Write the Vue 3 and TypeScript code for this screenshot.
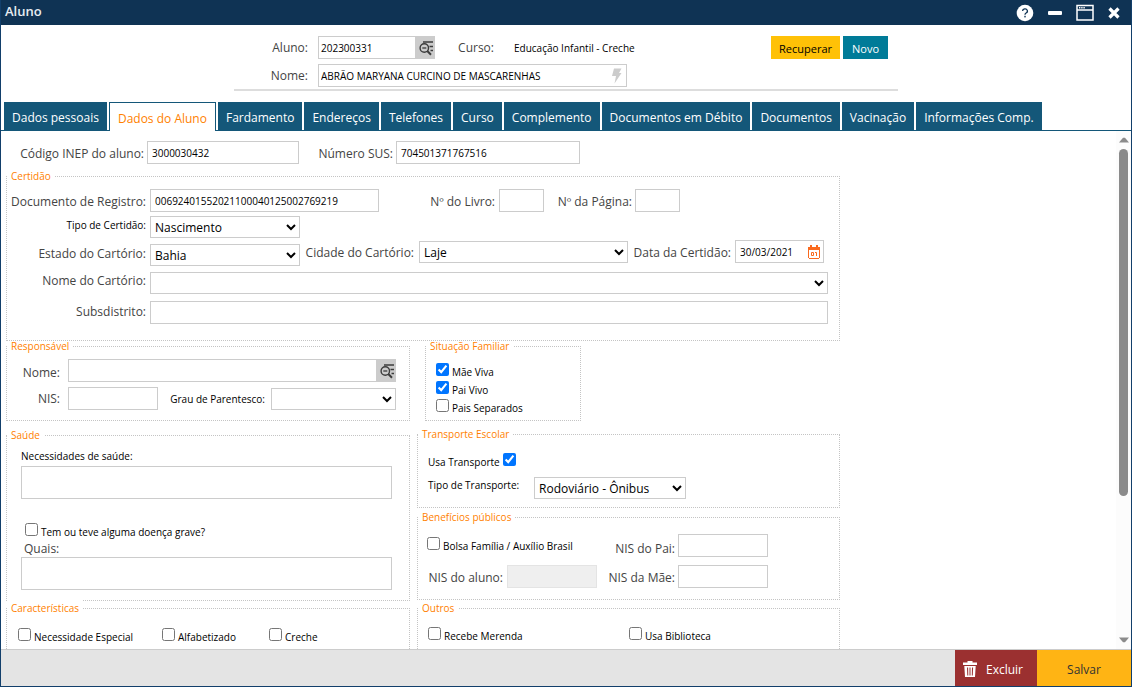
<script setup lang="ts">
import { ref } from 'vue'

const tabs = [
  'Dados pessoais',
  'Dados do Aluno',
  'Fardamento',
  'Endereços',
  'Telefones',
  'Curso',
  'Complemento',
  'Documentos em Débito',
  'Documentos',
  'Vacinação',
  'Informações Comp.',
]
const activeTab = ref('Dados do Aluno')

const family = ref([
  { id: 'mae-viva', label: 'Mãe Viva', checked: true },
  { id: 'pai-vivo', label: 'Pai Vivo', checked: true },
  { id: 'pais-separados', label: 'Pais Separados', checked: false },
])

const form = ref({
  aluno: '202300331',
  nome: 'ABRÃO MARYANA CURCINO DE MASCARENHAS',
  inep: '3000030432',
  sus: '704501371767516',
  registro: '00692401552021100040125002769219',
  livro: '',
  pagina: '',
  tipo: 'Nascimento',
  estado: 'Bahia',
  cidade: 'Laje',
  data: '30/03/2021',
  cartorio: '',
  subdistrito: '',
  responsavel: '',
  nis: '',
  parentesco: '',
  necessidades: '',
  doenca: false,
  quais: '',
  usaTransporte: true,
  transporte: 'Rodoviário - Ônibus',
  bolsa: false,
  nisPai: '',
  nisAluno: '',
  nisMae: '',
})
</script>

<template>
  <div class="window">
    <header class="titlebar">
      <h1>Aluno</h1>
      <div class="controls">
        <button type="button" aria-label="Ajuda">
          <svg width="18" height="18" viewBox="0 0 18 18">
            <circle cx="9" cy="9" r="8.3" fill="#fff" />
            <path d="M6.600 7a2.400 2.200 0 1 1 3.500 2c-.8.5-1.100.8-1.100 1.700" fill="none" stroke="#0f3354" stroke-width="1.300" />
            <rect x="8.300" y="11.800" width="1.400" height="1.600" fill="#0f3354" />
          </svg>
        </button>
        <button type="button" aria-label="Minimizar">
          <svg width="14" height="18" viewBox="0 0 14 18"><rect x="0" y="7" width="14" height="4" rx="1" fill="#fff" /></svg>
        </button>
        <button type="button" aria-label="Maximizar">
          <svg width="18" height="18" viewBox="0 0 18 18">
            <path d="M1 1.500h16v14.500H1zM1 6h16" fill="none" stroke="#fff" stroke-width="1.500" />
            <path d="M3 3.700h6" stroke="#fff" stroke-width="1.400" stroke-dasharray="1.400 .8" />
          </svg>
        </button>
        <button type="button" aria-label="Fechar">
          <svg width="12" height="18" viewBox="0 0 12 18"><path d="M1.500 4.500l9 9m0-9l-9 9" stroke="#fff" stroke-width="3.200" /></svg>
        </button>
      </div>
    </header>

    <section class="summary">
      <div class="row">
        <label class="lbl head-lbl" for="aluno">Aluno:</label>
        <div class="lookup code">
          <input id="aluno" v-model="form.aluno" class="tight" type="text" />
          <button type="button" aria-label="Pesquisar aluno">
            <svg width="18" height="18" viewBox="0 0 18 18" fill="none" stroke="#3c3c3c">
              <path d="M6 3h10M12.500 7.500h3.500M13.500 11.500h2.500" stroke-width="1.700" />
              <circle cx="7.300" cy="9" r="4.200" stroke-width="1.400" />
              <path d="M5.300 9h4" stroke-width="1.300" /><path d="M10.300 12l3.700 3.700" stroke-width="2" />
            </svg>
          </button>
        </div>
        <span class="lbl course-lbl">Curso:</span>
        <span class="course">Educação Infantil - Creche</span>
        <div class="actions">
          <button type="button" class="recover">Recuperar</button>
          <button type="button" class="new">Novo</button>
        </div>
      </div>
      <div class="row">
        <label class="lbl head-lbl" for="nome">Nome:</label>
        <div class="boxed name-box">
          <input id="nome" v-model="form.nome" class="tight" type="text" />
          <svg width="12" height="18" viewBox="0 0 12 18"><path d="M3 1.500H10.500L8 6h2.500L3.500 16.500 5 9H1z" fill="#ccc" /></svg>
        </div>
      </div>
    </section>

    <nav class="tabs" role="tablist">
      <button
        v-for="tab in tabs"
        :key="tab"
        type="button"
        role="tab"
        :aria-selected="tab === activeTab"
        :class="{ active: tab === activeTab }"
        @click="activeTab = tab"
      >
        {{ tab }}
      </button>
    </nav>

    <div class="body">
      <main class="scroll">
        <form class="form" @submit.prevent>
          <div class="row codes">
            <label class="lbl" for="inep">Código INEP do aluno:</label>
            <input id="inep" v-model="form.inep" class="w-inep" type="text" />
            <label class="lbl sus-lbl" for="sus">Número SUS:</label>
            <input id="sus" v-model="form.sus" class="w-sus" type="text" />
          </div>

          <fieldset class="certidao">
            <legend>Certidão</legend>
            <div class="row">
              <label class="lbl first" for="registro">Documento de Registro:</label>
              <input id="registro" v-model="form.registro" class="w-reg" type="text" />
              <label class="lbl livro-lbl" for="livro">Nº do Livro:</label>
              <input id="livro" v-model="form.livro" class="w-mini" type="text" />
              <label class="lbl pagina-lbl" for="pagina">Nº da Página:</label>
              <input id="pagina" v-model="form.pagina" class="w-mini" type="text" />
            </div>
            <div class="row tipo-row">
              <label class="lbl first dark" for="tipo">Tipo de Certidão:</label>
              <select id="tipo" v-model="form.tipo" class="w-150"><option>Nascimento</option><option>Casamento</option></select>
            </div>
            <div class="row estado-row">
              <div class="row low">
                <label class="lbl first" for="estado">Estado do Cartório:</label>
                <select id="estado" v-model="form.estado" class="w-150"><option>Bahia</option></select>
              </div>
              <label class="lbl cidade-lbl" for="cidade">Cidade do Cartório:</label>
              <select id="cidade" v-model="form.cidade" class="w-cidade"><option>Laje</option></select>
              <label class="lbl data-lbl" for="data">Data da Certidão:</label>
              <div class="boxed date-box">
                <input id="data" v-model="form.data" type="text" />
                <button type="button" aria-label="Abrir calendário">
                  <svg width="12" height="14" viewBox="0 0 12 14" fill="#fa6a1e">
                    <path fill-rule="evenodd" d="M0 2h12v11h-1v1H1v-1H0zM1 5v8h10V5z" />
                    <path d="M2 0h2v3H2zM8 0h2v3H8z" />
                    <path d="M3.500 7.500h2v3h-2zM7 7.500h1.500V11" fill="none" stroke="#fa6a1e" />
                  </svg>
                </button>
              </div>
            </div>
            <div class="row cartorio-row">
              <label class="lbl first" for="cartorio">Nome do Cartório:</label>
              <select id="cartorio" v-model="form.cartorio" class="grow"><option value=""></option></select>
            </div>
            <div class="row sub-row">
              <label class="lbl first" for="subdistrito">Subsdistrito:</label>
              <input id="subdistrito" v-model="form.subdistrito" class="grow" type="text" />
            </div>
          </fieldset>

          <div class="columns">
            <fieldset class="responsavel">
              <legend>Responsável</legend>
              <div class="row">
                <label class="lbl short" for="responsavel">Nome:</label>
                <div class="lookup grow">
                  <input id="responsavel" v-model="form.responsavel" type="text" />
                  <button type="button" aria-label="Pesquisar responsável">
                    <svg width="18" height="18" viewBox="0 0 18 18" fill="none" stroke="#3c3c3c">
                      <path d="M6 3h10M12.500 7.500h3.500M13.500 11.500h2.500" stroke-width="1.700" />
                      <circle cx="7.300" cy="9" r="4.200" stroke-width="1.400" />
                      <path d="M5.300 9h4" stroke-width="1.300" /><path d="M10.300 12l3.700 3.700" stroke-width="2" />
                    </svg>
                  </button>
                </div>
              </div>
              <div class="row nis-row">
                <label class="lbl short" for="nis">NIS:</label>
                <input id="nis" v-model="form.nis" class="w-90" type="text" />
                <label class="lbl dark grau-lbl" for="parentesco">Grau de Parentesco:</label>
                <select id="parentesco" v-model="form.parentesco" class="grow"><option value=""></option></select>
              </div>
            </fieldset>

            <fieldset class="situacao">
              <legend>Situação Familiar</legend>
              <div v-for="item in family" :key="item.id" class="check">
                <input :id="item.id" v-model="item.checked" type="checkbox" />
                <label :for="item.id">{{ item.label }}</label>
              </div>
            </fieldset>

            <fieldset class="saude">
              <legend>Saúde</legend>
              <label class="block dark" for="necessidades">Necessidades de saúde:</label>
              <textarea id="necessidades" v-model="form.necessidades"></textarea>
              <div class="check doenca">
                <input id="doenca" v-model="form.doenca" type="checkbox" />
                <label for="doenca">Tem ou teve alguma doença grave?</label>
              </div>
              <label class="block quais" for="quais">Quais:</label>
              <textarea id="quais" v-model="form.quais"></textarea>
            </fieldset>

            <div class="stack">
              <fieldset class="transporte">
                <legend>Transporte Escolar</legend>
                <div class="check">
                  <label for="usa-transporte">Usa Transporte</label>
                  <input id="usa-transporte" v-model="form.usaTransporte" type="checkbox" />
                </div>
                <div class="row tipo-transporte">
                  <label class="lbl dark" for="transporte">Tipo de Transporte:</label>
                  <select id="transporte" v-model="form.transporte" class="w-inep"><option>Rodoviário - Ônibus</option></select>
                </div>
              </fieldset>
              <fieldset class="beneficios">
                <legend>Benefícios públicos</legend>
                <div class="row">
                  <div class="check bolsa">
                    <input id="bolsa" v-model="form.bolsa" type="checkbox" />
                    <label for="bolsa">Bolsa Família / Auxílio Brasil</label>
                  </div>
                  <label class="lbl nis-lbl" for="nis-pai">NIS do Pai:</label>
                  <input id="nis-pai" v-model="form.nisPai" class="w-90" type="text" />
                </div>
                <div class="row">
                  <label class="lbl aluno-lbl" for="nis-aluno">NIS do aluno:</label>
                  <input id="nis-aluno" v-model="form.nisAluno" class="w-90" type="text" disabled />
                  <label class="lbl nis-lbl" for="nis-mae">NIS da Mãe:</label>
                  <input id="nis-mae" v-model="form.nisMae" class="w-90" type="text" />
                </div>
              </fieldset>
            </div>

            <fieldset class="caracteristicas">
              <legend>Características</legend>
              <div class="check"><input id="especial" type="checkbox" /><label for="especial">Necessidade Especial</label></div>
              <div class="check"><input id="alfabetizado" type="checkbox" /><label for="alfabetizado">Alfabetizado</label></div>
              <div class="check"><input id="creche" type="checkbox" /><label for="creche">Creche</label></div>
            </fieldset>

            <fieldset class="outros">
              <legend>Outros</legend>
              <div class="check"><input id="merenda" type="checkbox" /><label for="merenda">Recebe Merenda</label></div>
              <div class="check"><input id="biblioteca" type="checkbox" /><label for="biblioteca">Usa Biblioteca</label></div>
            </fieldset>
          </div>
        </form>
      </main>
      <div class="scrollbar" aria-hidden="true">
        <svg width="10" height="6" viewBox="0 0 10 6"><path d="M0 5.500L4 .8h2l4 4.700z" fill="#8b8b8b" /></svg>
        <div class="track"><div class="thumb"></div></div>
        <svg width="10" height="6" viewBox="0 0 10 6"><path d="M0 .5L4 5.200h2L10 .5z" fill="#8b8b8b" /></svg>
      </div>
    </div>

    <footer class="footer">
      <button type="button" class="delete">
        <svg width="14" height="16" viewBox="0 0 14 16" fill="#fff">
          <path d="M4.500 0h5v1.500H14V4H0V1.500h4.500z" />
          <path fill-rule="evenodd" d="M1.300 5h11.400L12 16H2zM4 6.500l.3 8h1l-.2-8zM6.500 6.500v8h1v-8zM9 6.500l-.2 8h1l.3-8z" />
        </svg>
        Excluir
      </button>
      <button type="button" class="save">Salvar</button>
    </footer>
  </div>
</template>

<style>
body {
  margin: 0;
}
</style>

<style scoped>
* {
  box-sizing: border-box;
}
.window {
  display: flex;
  flex-direction: column;
  height: 100vh;
  border: 1px solid #123f6b;
  border-top: 0;
  background: #fff;
  color: #000;
  font-family: 'Open Sans', 'Noto Sans', sans-serif;
  font-size: 10px;
  overflow: hidden;
}
button,
input,
select,
textarea {
  font-family: inherit;
  margin: 0;
}
button {
  border: 0;
  padding: 0;
  background: none;
  font-size: 12px;
}
svg {
  display: block;
  flex: none;
}
.titlebar {
  display: flex;
  flex: none;
  justify-content: space-between;
  align-items: center;
  height: 25px;
  padding: 0 11px 0 4px;
  background: #0f3354;
}
.titlebar h1 {
  margin: 0;
  padding-bottom: 3px;
  color: #e8edf2;
  font-size: 13px;
  font-weight: 600;
  line-height: 20px;
}
.controls {
  display: flex;
  gap: 14px;
}
.row {
  display: flex;
  align-items: center;
}
.lbl {
  flex: none;
  padding-top: 2px;
  color: #444;
  font-size: 12px;
  line-height: 16px;
  text-align: right;
  white-space: nowrap;
}
.dark.lbl,
.dark {
  color: #000;
  font-size: 10px;
}
input[type='text'],
select,
textarea {
  display: block;
  flex: none;
  border: 1px solid #ccc;
  border-radius: 0;
  background: #fff;
  color: #000;
  outline: 0;
}
input[type='text'] {
  height: 23px;
  padding: 0 4px;
  font-size: 10px;
}
input[type='text'].tight {
  padding: 0 2px;
}
input[type='text']:disabled {
  border-color: #e4e4e4;
  background: #efefef;
}
select {
  height: 22px;
  padding: 0;
  font-size: 12px;
}
textarea {
  width: 100%;
  height: 33px;
  resize: none;
}
input[type='text'].grow,
select.grow,
.grow {
  flex: 1;
  min-width: 0;
}
.lookup {
  display: flex;
}
.lookup input[type='text'] {
  flex: 1;
  min-width: 0;
  border-right: 0;
}
.lookup button {
  display: flex;
  align-items: center;
  width: 20px;
  padding-left: 2px;
  background: #ccc;
}
.boxed {
  display: flex;
  align-items: center;
  height: 23px;
  border: 1px solid #ccc;
}
.boxed input[type='text'] {
  flex: 1;
  min-width: 0;
  height: 21px;
  border: 0;
}
.summary {
  display: flex;
  flex: none;
  flex-direction: column;
  gap: 5px;
  width: 664px;
  max-width: 100%;
  margin: 0 auto 11px;
  padding: 11px 0 2px;
  border-bottom: 2px solid #ddd;
}
.summary .lbl {
  padding-top: 0;
}
.head-lbl {
  width: 74px;
  margin-right: 10px;
}
.code {
  width: 117px;
}
.course-lbl {
  width: 59px;
}
.course {
  margin-left: 20px;
  white-space: nowrap;
}
.actions {
  display: flex;
  gap: 3px;
  margin-left: auto;
  padding-right: 10px;
}
.actions button {
  width: 45px;
  height: 23px;
  padding-top: 2px;
  background: #007b98;
  color: #fff;
  font-size: 11px;
}
.actions .recover {
  width: 69px;
  color: #000;
  background: #ffc107;
}
.name-box {
  width: 309px;
  padding-right: 3px;
}
.tabs {
  display: flex;
  flex: none;
  gap: 2px;
  height: 29px;
  padding-left: 3px;
  border-bottom: 1px solid #145779;
}
.tabs button {
  height: 28px;
  padding: 3px 8px 0;
  background: #145779;
  color: #fff;
  white-space: nowrap;
}
.tabs button.active {
  height: 29px;
  border: 1px solid #145779;
  border-bottom: 0;
  background: #fff;
  color: #ff7f00;
}
.body {
  display: flex;
  flex: 1;
  min-height: 0;
}
.scroll {
  flex: 1;
  min-width: 0;
  overflow: auto;
  scrollbar-width: none;
}
.form {
  max-width: 839px;
  padding: 10px 0 20px 5px;
}
.codes {
  padding-left: 14px;
}
.codes .lbl {
  width: 124px;
  margin-right: 3px;
}
.codes .sus-lbl {
  width: 94px;
}
.w-inep {
  width: 152px;
}
.w-sus {
  width: 184px;
}
.w-reg {
  width: 229px;
}
.w-mini {
  width: 45px;
}
.w-150 {
  width: 150px;
}
.w-cidade {
  width: 209px;
}
.w-90 {
  width: 90px;
}
fieldset {
  --inset: 0px;
  min-width: 0;
  margin: 0;
  border: 1px dotted #c4c4c4;
}
legend {
  margin-left: calc(var(--inset) * -1);
  padding: 0 4px;
  background: #fff;
  color: #ff7f00;
  font-size: 10px;
  line-height: 10px;
}
.certidao {
  margin-top: 7px;
  padding: 8px 11px 16px var(--inset);
}
.first {
  width: 139px;
  margin-right: 4px;
}
.livro-lbl {
  width: 116px;
  margin-right: 4px;
}
.pagina-lbl {
  width: 88px;
  margin-right: 3px;
}
.tipo-row {
  margin-top: 4px;
}
.tipo-row .lbl {
  padding: 0 0 4px;
}
.estado-row {
  align-items: flex-start;
  height: 26px;
  margin-top: 2px;
}
.estado-row .low {
  align-self: flex-end;
}
.estado-row > .lbl {
  padding-top: 5px;
}
.estado-row .lbl.first {
  padding: 0 0 2px;
}
.cidade-lbl {
  width: 114px;
  margin-right: 5px;
}
.w-cidade {
  margin-top: 1px;
}
.data-lbl {
  width: 103px;
  margin-right: 4px;
}
.date-box {
  width: 89px;
  padding-right: 3px;
}
.cartorio-row {
  margin-top: 6px;
}
.cartorio-row .lbl {
  padding: 0 0 4px;
}
.sub-row {
  margin-top: 7px;
}
.sub-row .lbl {
  padding: 0 0 2px;
}
.columns {
  display: grid;
  grid-template-columns: minmax(0, 404fr) minmax(0, 423fr);
  column-gap: 7px;
}
.responsavel {
  padding: 8px 13px 10px var(--inset);
}
.short {
  width: 53px;
  margin-right: 8px;
}
.responsavel .lbl {
  padding-top: 5px;
}
.responsavel .nis-row .lbl {
  padding-top: 0;
}
.nis-row {
  margin-top: 5px;
}
.grau-lbl {
  width: 107px;
  margin-right: 6px;
}
.situacao {
  --inset: 10px;
  width: 156px;
  margin-left: 8px;
  padding: 12px 0 3px var(--inset);
}
.check {
  display: flex;
  align-items: flex-start;
  gap: 3px;
  height: 18px;
  line-height: 18px;
  white-space: nowrap;
}
.check input {
  flex: none;
  width: 13px;
  height: 13px;
}
.saude {
  --inset: 14px;
  margin-top: 9px;
  padding: 8px 17px 10px var(--inset);
}
.block {
  display: block;
  line-height: 16px;
  padding-bottom: 2px;
}
.quais {
  padding: 0 3px;
  color: #444;
  font-size: 12px;
}
.doenca {
  margin-top: 24px;
  padding-left: 4px;
}
.stack {
  display: flex;
  flex-direction: column;
  gap: 4px;
  margin-top: 8px;
}
.transporte {
  --inset: 10px;
  padding: 14px 0 8px var(--inset);
}
.tipo-transporte {
  align-items: flex-start;
  margin-top: 6px;
}
.tipo-transporte .lbl {
  width: 91px;
  margin-right: 15px;
  padding: 0;
  text-align: left;
}
.beneficios {
  --inset: 9px;
  padding: 12px 0 11px var(--inset);
}
.beneficios .row + .row {
  margin-top: 8px;
}
.beneficios .row {
  height: 23px;
}
.bolsa {
  width: 170px;
}
.aluno-lbl {
  width: 76px;
  margin-right: 4px;
}
.nis-lbl {
  width: 78px;
  margin-right: 3px;
}
.beneficios .row:first-of-type .nis-lbl {
  padding-top: 6px;
}
.caracteristicas,
.outros {
  display: grid;
  margin-top: 2px;
}
.caracteristicas {
  --inset: 11px;
  grid-template-columns: 144px 107px auto;
  padding: 15px 0 40px var(--inset);
}
.caracteristicas legend {
  box-shadow: 0 -4px 0 #fff;
}
.outros {
  --inset: 10px;
  grid-template-columns: 201px auto;
  padding: 14px 0 40px var(--inset);
}
.scrollbar {
  display: flex;
  flex: none;
  flex-direction: column;
  align-items: center;
  width: 15px;
  padding: 6px 0;
  background: #fcfcfc;
}
.track {
  flex: 1;
  width: 9px;
  padding: 6px 0;
}
.thumb {
  height: 72%;
  border-radius: 5px;
  background: #8b8b8b;
}
.footer {
  display: flex;
  flex: none;
  justify-content: flex-end;
  height: 37px;
  border-top: 1px solid #ccc;
  background: #e4e4e4;
}
.footer button {
  display: flex;
  align-items: center;
  justify-content: center;
  gap: 9px;
  width: 82px;
  padding: 2px 6px 0 0;
  background: #9b3030;
  color: #fff;
}
.footer .save {
  width: 94px;
  padding-right: 0;
  background: #ffb414;
  color: #333;
}
</style>
